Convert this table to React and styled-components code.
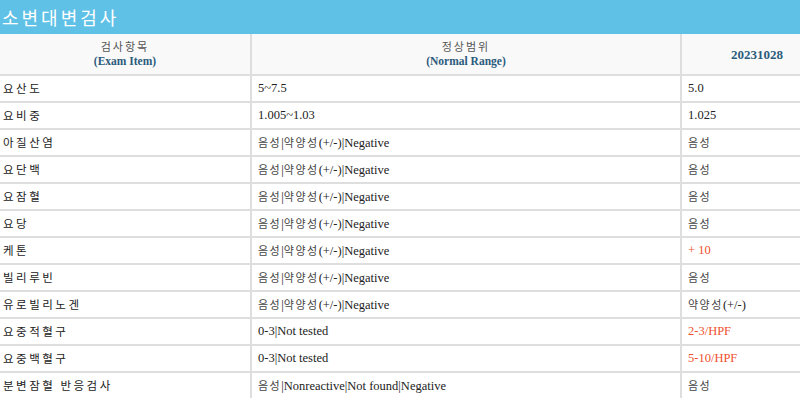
import React from 'react';
import styled, { createGlobalStyle } from 'styled-components';

const GlobalStyle = createGlobalStyle`
  html, body {
    margin: 0;
    padding: 0;
    background: #fff;
  }
  body {
    font-family: "Liberation Serif", "Noto Sans CJK KR", serif;
  }
`;

const Page = styled.div`
  width: 800px;
  overflow: hidden;
`;

const TitleBar = styled.div`
  height: 34px;
  background-color: #5fc1e6;
  color: #fff;
  display: flex;
  align-items: center;
  padding-left: 2px;
  box-sizing: border-box;
`;

const Title = styled.h1`
  margin: 0;
  font-family: "Noto Sans CJK KR", sans-serif;
  font-weight: 400;
  font-size: 18px;
  letter-spacing: 3px;
`;

const Table = styled.table`
  width: 832px;
  border-collapse: collapse;
  table-layout: fixed;
`;

const HeadCell = styled.th`
  background: #f9f9f9;
  height: 40px;
  padding: 0;
  border-right: 2px solid #dedede;
  border-bottom: 2px solid #dedede;
  text-align: center;
  vertical-align: middle;
  font-weight: 400;
  &:last-child {
    border-right: none;
  }
`;

const HeadKo = styled.div`
  font-family: "Noto Sans CJK KR", sans-serif;
  font-size: 11px;
  letter-spacing: 2px;
  color: #555;
  line-height: 15px;
`;

const HeadEn = styled.div`
  font-size: 11.5px;
  font-weight: 700;
  color: #2b5b7c;
  line-height: 15px;
`;

const DateHead = styled.span`
  font-size: 13px;
  font-weight: 700;
  color: #2b5b7c;
`;

const Cell = styled.td`
  height: 25px;
  padding: 0 0 0 ${p => (p.$first ? '3px' : '6px')};
  border-right: 2px solid #dedede;
  border-bottom: 2px solid #dedede;
  font-size: 12.5px;
  color: ${p => (p.$alert ? '#f0502e' : '#222')};
  white-space: nowrap;
  overflow: hidden;
  vertical-align: middle;
  &:last-child {
    border-right: none;
  }
`;

const ItemName = styled.span`
  font-family: "Noto Sans CJK KR", sans-serif;
  font-size: 11.5px;
  letter-spacing: 2.5px;
  color: #222;
`;

const Hangul = styled.span`
  font-family: "Noto Sans CJK KR", sans-serif;
  font-size: 11px;
  letter-spacing: 1.5px;
  color: #444;
`;

// wrap korean runs so they get the wider spacing seen in the screenshot
const Mixed = ({ text }) =>
  text.split(/([가-힣]+)/).map((part, i) =>
    /[가-힣]/.test(part) ? <Hangul key={i}>{part}</Hangul> : part
  );

const rows = [
  ['요산도', '5~7.5', '5.0'],
  ['요비중', '1.005~1.03', '1.025'],
  ['아질산염', '음성|약양성(+/-)|Negative', '음성'],
  ['요단백', '음성|약양성(+/-)|Negative', '음성'],
  ['요잠혈', '음성|약양성(+/-)|Negative', '음성'],
  ['요당', '음성|약양성(+/-)|Negative', '음성'],
  ['케톤', '음성|약양성(+/-)|Negative', '+ 10', true],
  ['빌리루빈', '음성|약양성(+/-)|Negative', '음성'],
  ['유로빌리노겐', '음성|약양성(+/-)|Negative', '약양성(+/-)'],
  ['요중적혈구', '0-3|Not tested', '2-3/HPF', true],
  ['요중백혈구', '0-3|Not tested', '5-10/HPF', true],
  ['분변잠혈 반응검사', '음성|Nonreactive|Not found|Negative', '음성'],
];

const App = () => (
  <Page>
    <GlobalStyle />
    <TitleBar>
      <Title>소변대변검사</Title>
    </TitleBar>
    <Table>
      <colgroup>
        <col style={{ width: 251 }} />
        <col style={{ width: 430 }} />
        <col style={{ width: 151 }} />
      </colgroup>
      <thead>
        <tr>
          <HeadCell>
            <HeadKo>검사항목</HeadKo>
            <HeadEn>(Exam Item)</HeadEn>
          </HeadCell>
          <HeadCell>
            <HeadKo>정상범위</HeadKo>
            <HeadEn>(Normal Range)</HeadEn>
          </HeadCell>
          <HeadCell>
            <DateHead>20231028</DateHead>
          </HeadCell>
        </tr>
      </thead>
      <tbody>
        {rows.map(([name, range, value, alert]) => (
          <tr key={name}>
            <Cell $first>
              <ItemName>{name}</ItemName>
            </Cell>
            <Cell>
              <Mixed text={range} />
            </Cell>
            <Cell $alert={alert}>
              <Mixed text={value} />
            </Cell>
          </tr>
        ))}
      </tbody>
    </Table>
  </Page>
);

export default App;
